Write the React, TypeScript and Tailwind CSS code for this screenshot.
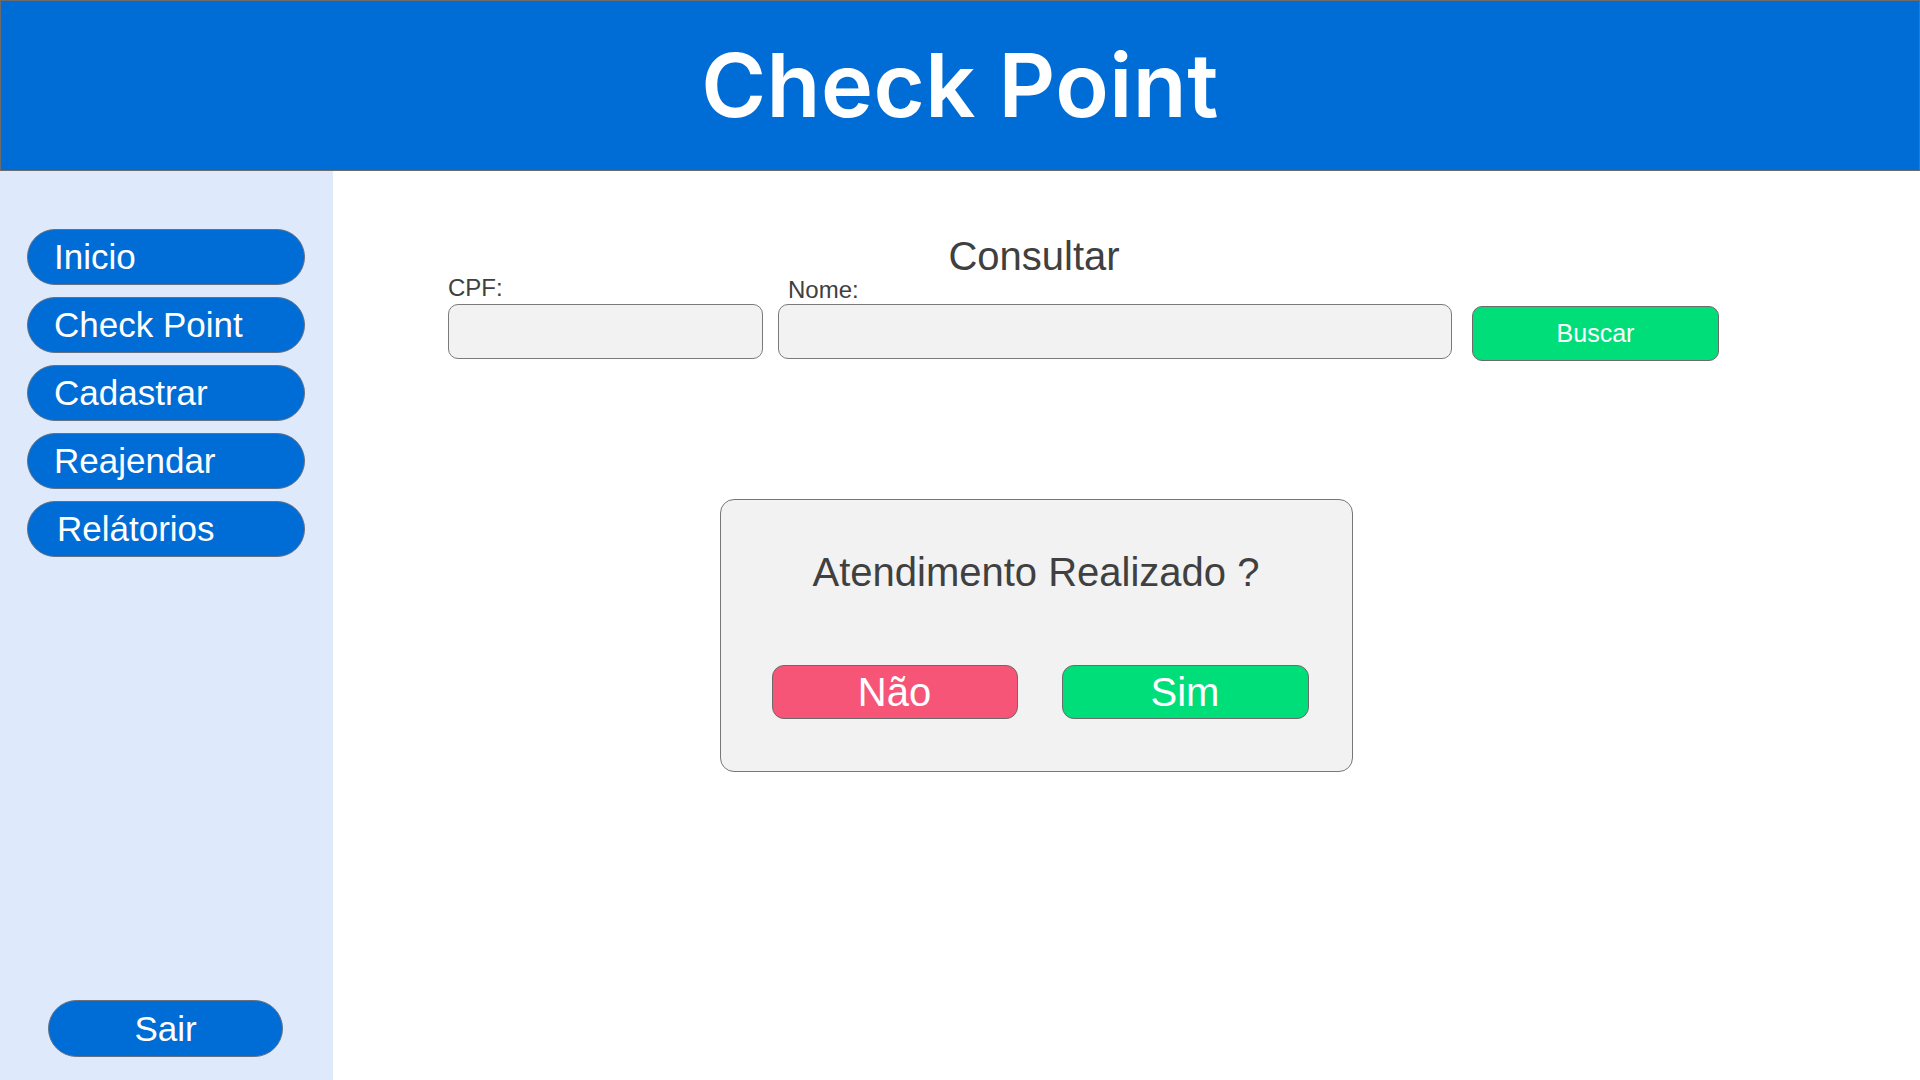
import React from 'react';

const navItems = ['Inicio', 'Check Point', 'Cadastrar', 'Reajendar', 'Relátorios'];

const App: React.FC = () => {
  return (
    <div className="w-[1920px] h-[1080px] flex flex-col bg-white overflow-hidden font-['Liberation_Sans',Arial,sans-serif]">
      {/* header */}
      <header className="h-[171px] shrink-0 bg-[#006dd6] border border-[#6b6b6b] flex items-center justify-center">
        <h1 className="text-white text-[88px] leading-none font-semibold tracking-[0.5px] font-['Inter',sans-serif] pb-[2px]">
          Check Point
        </h1>
      </header>

      <div className="flex flex-1">
        {/* sidebar */}
        <aside className="w-[333px] shrink-0 bg-[#deeafc] flex flex-col justify-between pt-[58px] pb-[23px]">
          <nav className="flex flex-col gap-[12px] pl-[27px]">
            {navItems.map((item, i) => (
              <button
                key={item}
                className={`w-[278px] h-[56px] rounded-full bg-[#006dd6] border border-[#667080] text-white text-[35px] leading-none text-left pb-[2px] ${i === 4 ? 'pl-[29px]' : 'pl-[26px]'}`}
              >
                {item}
              </button>
            ))}
          </nav>
          <div className="pl-[48px]">
            <button className="w-[235px] h-[57px] rounded-full bg-[#006dd6] border border-[#667080] text-white text-[35px] leading-none">
              Sair
            </button>
          </div>
        </aside>

        {/* main */}
        <main className="flex-1 pl-[115px] pt-[65px] text-[#404040]">
          <div className="w-[1176px] flex flex-col">
            <h2 className="text-center text-[40px] leading-none pr-[4px]">Consultar</h2>

            <div className="flex items-start">
              <div className="flex flex-col">
                <label className="h-[28px] text-[24px] leading-none">CPF:</label>
                <input className="w-[315px] h-[55px] rounded-[10px] bg-[#f2f2f2] border border-[#7a7a7a] outline-none px-3" />
              </div>
              <div className="flex flex-col ml-[15px]">
                <label className="h-[28px] text-[24px] leading-none pt-[2px] pl-[10px]">Nome:</label>
                <input className="w-[674px] h-[55px] rounded-[10px] bg-[#f2f2f2] border border-[#7a7a7a] outline-none px-3" />
              </div>
              <button className="ml-[20px] mt-[30px] w-[247px] h-[55px] shrink-0 rounded-[10px] bg-[#00de7a] border border-[#6b6b6b] text-white text-[25px] leading-none">
                Buscar
              </button>
            </div>

            <div className="mt-[138px] self-center w-[633px] h-[273px] rounded-[14px] bg-[#f2f2f2] border border-[#777777] pt-[52px]">
              <p className="text-center text-[40px] leading-none">Atendimento Realizado ?</p>
              <div className="flex gap-[44px] pl-[51px] mt-[73px]">
                <button className="w-[246px] h-[54px] rounded-[12px] bg-[#f75577] border border-[#6b6b6b] text-white text-[40px] leading-none">
                  Não
                </button>
                <button className="w-[247px] h-[54px] rounded-[12px] bg-[#00de7a] border border-[#6b6b6b] text-white text-[40px] leading-none">
                  Sim
                </button>
              </div>
            </div>
          </div>
        </main>
      </div>
    </div>
  );
};

export default App;
